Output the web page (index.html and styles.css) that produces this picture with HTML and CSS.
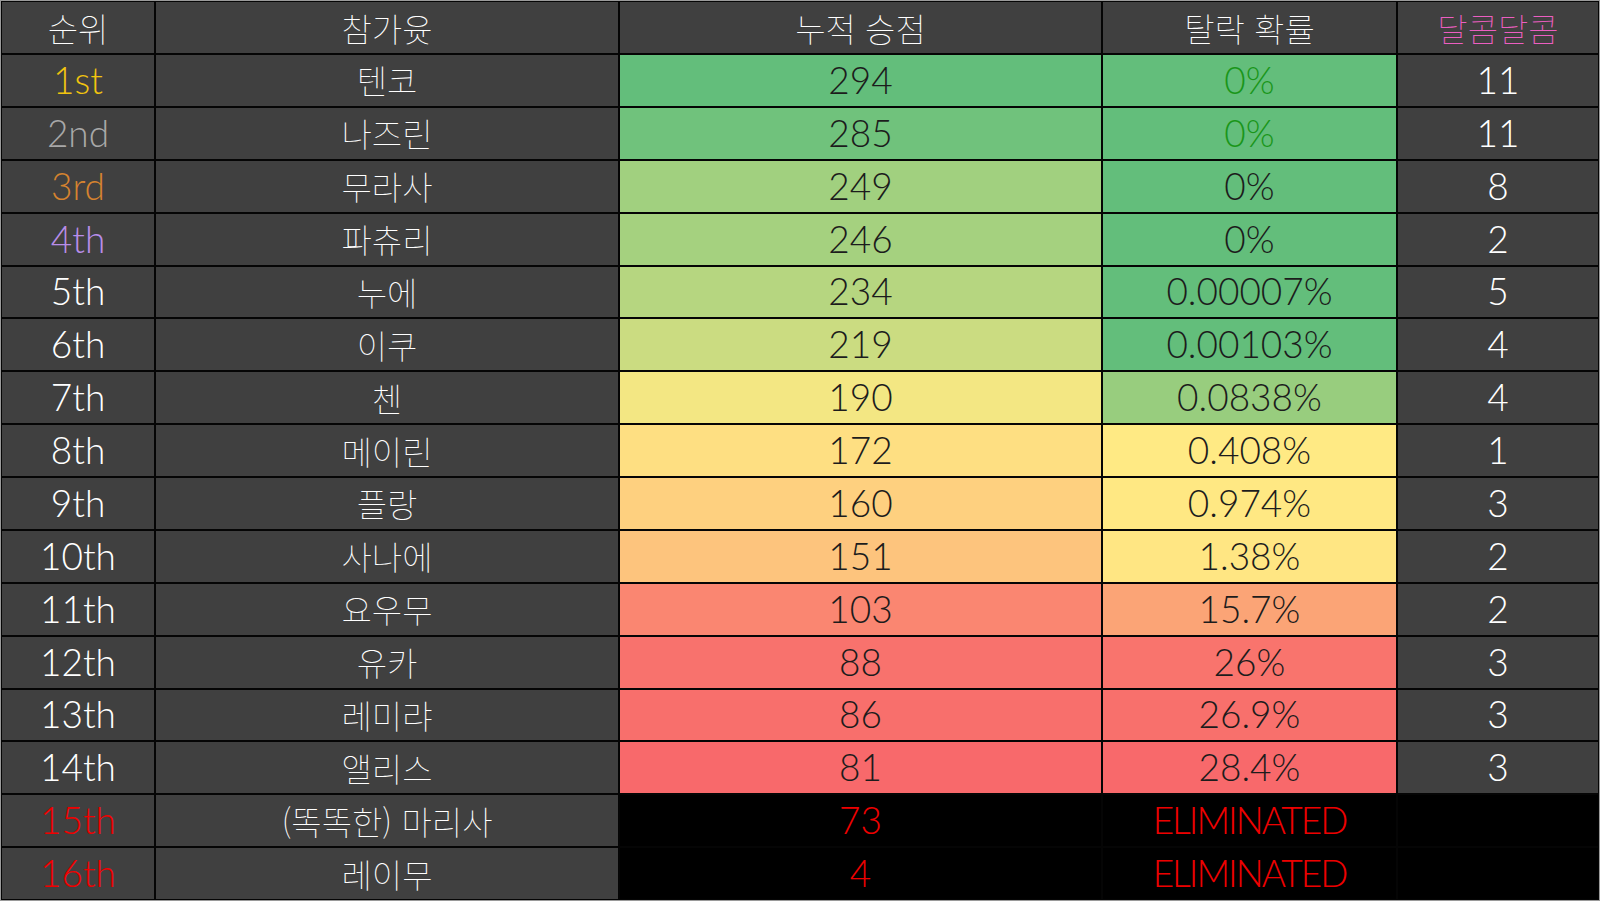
FILE: index.html
```html
<!DOCTYPE html>
<html lang="ko">
<head>
<meta charset="utf-8">
<title>순위표</title>
<link rel="stylesheet" href="styles.css">
</head>
<body>
<div class="board">
  <div class="grid">
    <div class="cell head ko">순위</div>
    <div class="cell head ko">참가윳</div>
    <div class="cell head ko">누적 승점</div>
    <div class="cell head ko">탈락 확률</div>
    <div class="cell head ko pink">달콤달콤</div>

    <div class="cell dark num gold">1st</div>
    <div class="cell dark ko">텐코</div>
    <div class="cell heat num" style="background:#63be7b">294</div>
    <div class="cell heat num green-text" style="background:#63be7b">0%</div>
    <div class="cell dark num">11</div>

    <div class="cell dark num silver">2nd</div>
    <div class="cell dark ko">나즈린</div>
    <div class="cell heat num" style="background:#70c27c">285</div>
    <div class="cell heat num green-text" style="background:#63be7b">0%</div>
    <div class="cell dark num">11</div>

    <div class="cell dark num bronze">3rd</div>
    <div class="cell dark ko">무라사</div>
    <div class="cell heat num" style="background:#a1d07f">249</div>
    <div class="cell heat num" style="background:#63be7b">0%</div>
    <div class="cell dark num">8</div>

    <div class="cell dark num violet">4th</div>
    <div class="cell dark ko">파츄리</div>
    <div class="cell heat num" style="background:#a5d17f">246</div>
    <div class="cell heat num" style="background:#63be7b">0%</div>
    <div class="cell dark num">2</div>

    <div class="cell dark num">5th</div>
    <div class="cell dark ko">누에</div>
    <div class="cell heat num" style="background:#b6d680">234</div>
    <div class="cell heat num" style="background:#63be7b">0.00007%</div>
    <div class="cell dark num">5</div>

    <div class="cell dark num">6th</div>
    <div class="cell dark ko">이쿠</div>
    <div class="cell heat num" style="background:#cbdc81">219</div>
    <div class="cell heat num" style="background:#63be7b">0.00103%</div>
    <div class="cell dark num">4</div>

    <div class="cell dark num">7th</div>
    <div class="cell dark ko">첸</div>
    <div class="cell heat num" style="background:#f3e783">190</div>
    <div class="cell heat num" style="background:#98cd7e">0.0838%</div>
    <div class="cell dark num">4</div>

    <div class="cell dark num">8th</div>
    <div class="cell dark ko">메이린</div>
    <div class="cell heat num" style="background:#fedf82">172</div>
    <div class="cell heat num" style="background:#ffea84">0.408%</div>
    <div class="cell dark num">1</div>

    <div class="cell dark num">9th</div>
    <div class="cell dark ko">플랑</div>
    <div class="cell heat num" style="background:#fed07f">160</div>
    <div class="cell heat num" style="background:#ffe883">0.974%</div>
    <div class="cell dark num">3</div>

    <div class="cell dark num">10th</div>
    <div class="cell dark ko">사나에</div>
    <div class="cell heat num" style="background:#fdc47d">151</div>
    <div class="cell heat num" style="background:#ffe683">1.38%</div>
    <div class="cell dark num">2</div>

    <div class="cell dark num">11th</div>
    <div class="cell dark ko">요우무</div>
    <div class="cell heat num" style="background:#fa8671">103</div>
    <div class="cell heat num" style="background:#fba476">15.7%</div>
    <div class="cell dark num">2</div>

    <div class="cell dark num">12th</div>
    <div class="cell dark ko">유카</div>
    <div class="cell heat num" style="background:#f8726d">88</div>
    <div class="cell heat num" style="background:#f9746d">26%</div>
    <div class="cell dark num">3</div>

    <div class="cell dark num">13th</div>
    <div class="cell dark ko">레미랴</div>
    <div class="cell heat num" style="background:#f86f6c">86</div>
    <div class="cell heat num" style="background:#f8706c">26.9%</div>
    <div class="cell dark num">3</div>

    <div class="cell dark num">14th</div>
    <div class="cell dark ko">앨리스</div>
    <div class="cell heat num" style="background:#f8696b">81</div>
    <div class="cell heat num" style="background:#f8696b">28.4%</div>
    <div class="cell dark num">3</div>

    <div class="cell dark num red">15th</div>
    <div class="cell dark ko">(똑똑한) 마리사</div>
    <div class="cell out num">73</div>
    <div class="cell out num elim">ELIMINATED</div>
    <div class="cell out"></div>

    <div class="cell dark num red">16th</div>
    <div class="cell dark ko">레이무</div>
    <div class="cell out num">4</div>
    <div class="cell out num elim">ELIMINATED</div>
    <div class="cell out"></div>
  </div>
</div>
</body>
</html>
```

FILE: styles.css
```css
html, body {
  margin: 0;
  padding: 0;
  background: #ffffff;
}

.board {
  width: 1600px;
  box-sizing: border-box;
  border: 1px solid #9a9a9a;
}

.grid {
  display: grid;
  grid-template-columns: 152px 462px 481px 293px 200px;
  grid-template-rows: 51px repeat(16, 50.875px);
  gap: 2px;
  padding: 1px;
  background: #050505;
}

.cell {
  display: flex;
  align-items: center;
  justify-content: center;
  overflow: hidden;
  white-space: nowrap;
  color: #ffffff;
}

.num {
  font-family: "Lato", "Noto Sans CJK KR", sans-serif;
  font-weight: 300;
  font-size: 37px;
  padding-bottom: 2px;
}

.elim {
  letter-spacing: -2px;
}

.ko {
  font-family: "Noto Sans CJK KR", "Noto Sans", sans-serif;
  font-weight: 100;
  font-size: 33px;
}

.head {
  background: #404040;
  color: #ffffff;
}

.dark {
  background: #404040;
}

.heat {
  color: #1c1c1c;
}

.out {
  background: #000000;
  color: #ee0000;
}

.pink { color: #ec5ec1; }
.gold { color: #f1c40f; }
.silver { color: #a8a8a8; }
.bronze { color: #d5832f; }
.violet { color: #b88de9; }
.red { color: #f00000; }
.green-text { color: #1a961a; }
```
